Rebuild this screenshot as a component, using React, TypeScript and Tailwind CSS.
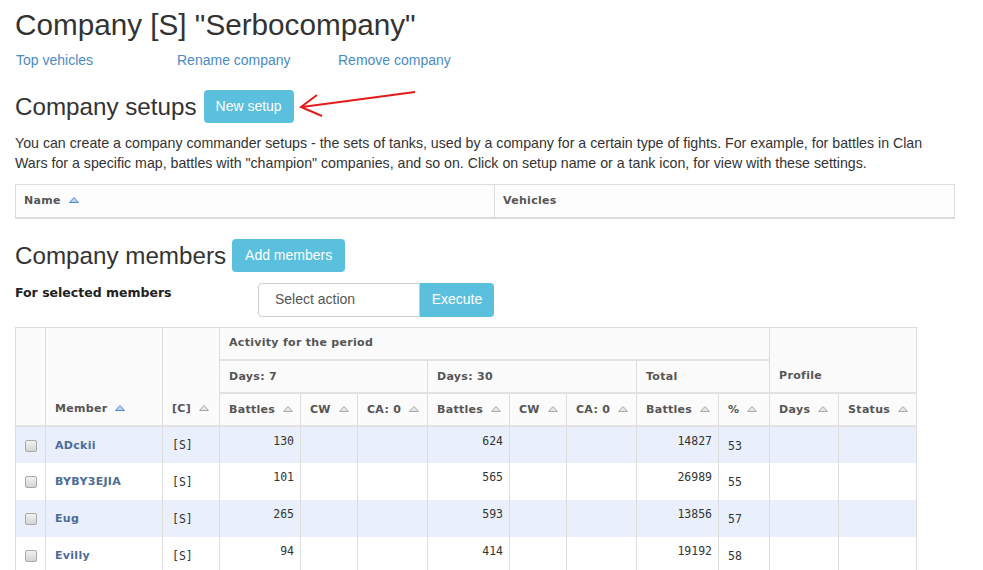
import React from "react";

type Row = { name: string; clan: string; b7: string; b30: string; total: string; pct: string };

const rows: Row[] = [
    { name: "ADckii", clan: "[S]", b7: "130", b30: "624", total: "14827", pct: "53" },
    { name: "BYBY3EJIA", clan: "[S]", b7: "101", b30: "565", total: "26989", pct: "55" },
    { name: "Eug", clan: "[S]", b7: "265", b30: "593", total: "13856", pct: "57" },
    { name: "Evilly", clan: "[S]", b7: "94", b30: "414", total: "19192", pct: "58" },
];

function Sort({ active = false }: { active?: boolean }) {
    return (
        <svg width="10" height="6" viewBox="0 0 10 6" className="inline-block ml-[8px] align-[1px]">
            <polygon
                points="5,0.5 9.5,5.5 0.5,5.5"
                fill={active ? "#b9d3f2" : "#e6e6e6"}
                stroke={active ? "#4f8ad0" : "#a8a8a8"}
                strokeWidth="1"
            />
        </svg>
    );
}

function Checkbox() {
    return (
        <span className="inline-block w-[12px] h-[12px] rounded-[2px] border border-[#a9a9a9] bg-linear-to-b from-[#f2f2f2] to-[#d4d4d4] align-middle" />
    );
}

const thBase = "border border-[#dddddd] border-b-2 border-b-[#e2e2e2] px-[9px] text-left font-bold text-[#555] bg-[#fbfbfb] leading-[14px] tracking-[0.3px] whitespace-nowrap";
const mono = "font-['DejaVu_Sans_Mono',monospace] text-[11.5px]";

export default function App() {
    return (
        <div className="relative w-[983px] h-[570px] overflow-hidden bg-white text-[#333] font-['Liberation_Sans',Arial,sans-serif]">
            <div className="pl-[15px] w-[955px]">
                <h1 className="text-[29.7px] leading-[36px] pt-[7px] font-normal">Company [S] "Serbocompany"</h1>

                <div className="flex mt-[7px] text-[14px] leading-[20px] text-[#4a8bc2]">
                    <a className="w-[161px] pl-[1px]">Top vehicles</a>
                    <a className="w-[161px] pl-[1px]">Rename company</a>
                    <a className="w-[161px] pl-[1px]">Remove company</a>
                </div>

                <div className="flex items-center gap-[7px] mt-[20px]">
                    <h2 className="text-[24.2px] leading-[33px]">Company setups</h2>
                    <button className="h-[33px] px-[12px] rounded-[4px] bg-[#5bc0de] text-white text-[14px]">New setup</button>
                </div>

                <p className="mt-[11px] text-[14.2px] leading-[19.5px] text-[#333] w-[918px]">
                    You can create a company commander setups - the sets of tanks, used by a company for a certain type of fights. For example, for battles in Clan Wars for a specific map, battles with "champion" companies, and so on. Click on setup name or a tank icon, for view with these settings.
                </p>

                <table className="mt-[11px] w-[940px] border-collapse table-fixed font-['DejaVu_Sans',Verdana,sans-serif] text-[11px]">
                    <colgroup>
                        <col className="w-[479px]" />
                        <col />
                    </colgroup>
                    <thead>
                        <tr className="h-[33px]">
                            <th className="border border-[#dddddd] border-b-2 border-b-[#dcdcdc] px-[8px] text-left font-bold text-[#555] bg-[#fdfdfd] tracking-[0.3px]">
                                Name<Sort active />
                            </th>
                            <th className="border border-[#dddddd] border-b-2 border-b-[#dcdcdc] px-[8px] text-left font-bold text-[#555] bg-[#fdfdfd] tracking-[0.3px]">
                                Vehicles
                            </th>
                        </tr>
                    </thead>
                </table>

                <div className="flex items-center gap-[6px] mt-[20px]">
                    <h2 className="text-[24.2px] leading-[33px]">Company members</h2>
                    <button className="h-[33px] px-[13px] rounded-[4px] bg-[#5bc0de] text-white text-[14px]">Add members</button>
                </div>

                <div className="flex items-start mt-[11px]">
                    <div className="w-[243px] font-['DejaVu_Sans',Verdana,sans-serif] text-[12.5px] leading-[20px] font-bold text-[#222]">For selected members</div>
                    <div className="flex h-[34px]">
                        <div className="w-[162px] h-full border border-[#cccccc] rounded-l-[4px] pl-[16px] flex items-center text-[14px] text-[#555]">
                            Select action
                        </div>
                        <button className="w-[74px] h-full rounded-r-[4px] bg-[#5bc0de] text-white text-[14px]">Execute</button>
                    </div>
                </div>

                <table className="mt-[10px] w-[901px] border-collapse table-fixed font-['DejaVu_Sans',Verdana,sans-serif] text-[11px]">
                    <colgroup>
                        <col className="w-[30px]" />
                        <col className="w-[117px]" />
                        <col className="w-[57px]" />
                        <col className="w-[81px]" />
                        <col className="w-[57px]" />
                        <col className="w-[70px]" />
                        <col className="w-[82px]" />
                        <col className="w-[57px]" />
                        <col className="w-[70px]" />
                        <col className="w-[82px]" />
                        <col className="w-[51px]" />
                        <col className="w-[69px]" />
                        <col className="w-[78px]" />
                    </colgroup>
                    <thead>
                        <tr className="h-[33px]">
                            <th rowSpan={3} className={thBase} />
                            <th rowSpan={3} className={`${thBase} align-bottom pb-[9px]`}>
                                Member<Sort active />
                            </th>
                            <th rowSpan={3} className={`${thBase} align-bottom pb-[9px]`}>
                                [C]<Sort />
                            </th>
                            <th colSpan={8} className={thBase}>Activity for the period</th>
                            <th rowSpan={2} colSpan={2} className={`${thBase} align-bottom pb-[9px]`}>Profile</th>
                        </tr>
                        <tr className="h-[33px]">
                            <th colSpan={3} className={thBase}>Days: 7</th>
                            <th colSpan={3} className={thBase}>Days: 30</th>
                            <th colSpan={2} className={thBase}>Total</th>
                        </tr>
                        <tr className="h-[33px]">
                            <th className={thBase}>Battles<Sort /></th>
                            <th className={thBase}>CW<Sort /></th>
                            <th className={thBase}>CA: 0<Sort /></th>
                            <th className={thBase}>Battles<Sort /></th>
                            <th className={thBase}>CW<Sort /></th>
                            <th className={thBase}>CA: 0<Sort /></th>
                            <th className={thBase}>Battles<Sort /></th>
                            <th className={thBase}>%<Sort /></th>
                            <th className={thBase}>Days<Sort /></th>
                            <th className={thBase}>Status<Sort /></th>
                        </tr>
                    </thead>
                    <tbody>
                        {rows.map((r, i) => (
                            <tr key={i} className={`h-[37px] ${i % 2 === 0 ? "bg-[#e9f0fb]" : "bg-white"}`}>
                                <td className="border-x border-[#dddddd] text-center pt-[2px]"><Checkbox /></td>
                                <td className="border-x border-[#dddddd] px-[9px] font-bold text-[#4d6b98] tracking-[0.3px] pt-[2px]">{r.name}</td>
                                <td className={`border-x border-[#dddddd] px-[9px] pt-[2px] ${mono}`}>{r.clan}</td>
                                <td className={`border-x border-[#dddddd] pr-[6px] text-right align-top pt-[6px] ${mono}`}>{r.b7}</td>
                                <td className="border-x border-[#dddddd]" />
                                <td className="border-x border-[#dddddd]" />
                                <td className={`border-x border-[#dddddd] pr-[6px] text-right align-top pt-[6px] ${mono}`}>{r.b30}</td>
                                <td className="border-x border-[#dddddd]" />
                                <td className="border-x border-[#dddddd]" />
                                <td className={`border-x border-[#dddddd] pr-[6px] text-right align-top pt-[6px] ${mono}`}>{r.total}</td>
                                <td className={`border-x border-[#dddddd] pl-[9px] pt-[3px] ${mono}`}>{r.pct}</td>
                                <td className="border-x border-[#dddddd]" />
                                <td className="border-x border-[#dddddd]" />
                            </tr>
                        ))}
                    </tbody>
                </table>
            </div>

            <svg className="absolute left-0 top-0 pointer-events-none" width="983" height="570">
                <line x1="415" y1="92" x2="302" y2="107" stroke="#e31b1b" strokeWidth="2" />
                <polyline points="317,95 301,107 322,116" fill="none" stroke="#e31b1b" strokeWidth="2" strokeLinejoin="miter" />
            </svg>
        </div>
    );
}
